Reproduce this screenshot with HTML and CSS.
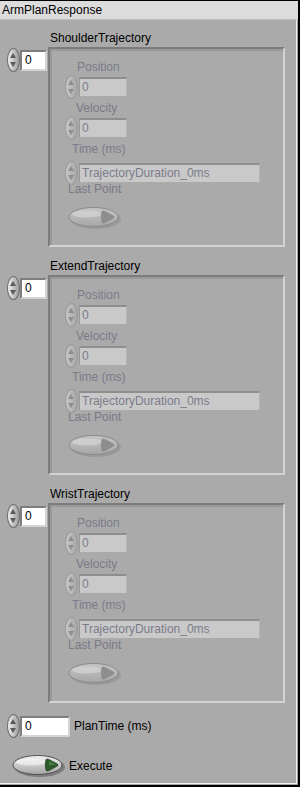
FILE: index.html
```html
<!DOCTYPE html>
<html lang="en">
<head>
    <meta charset="UTF-8">
    <meta name="viewport" content="width=device-width, initial-scale=1.0">
    <title>ArmPlanResponse</title>
    <link rel="stylesheet" href="styles.css">
</head>
<body>
<div class="window">
    <div class="titlebar">ArmPlanResponse</div>
    <div class="panel">

        <section class="cluster">
            <div class="cluster-name">ShoulderTrajectory</div>
            <div class="index"><span class="spin"></span><span class="num">0</span></div>
            <div class="frame">
                <div class="lbl lbl-pos">Position</div>
                <div class="row"><span class="spin off"></span><span class="num off">0</span></div>
                <div class="lbl lbl-vel">Velocity</div>
                <div class="row"><span class="spin off"></span><span class="num off">0</span></div>
                <div class="lbl lbl-time">Time (ms)</div>
                <div class="row row-str"><span class="spin off"></span><span class="str">TrajectoryDuration_0ms</span></div>
                <div class="lbl lbl-last">Last Point</div>
                <div class="btn btn-off">
                    <svg width="54" height="24" viewBox="0 0 54 24">
                        <defs><linearGradient id="bd1" x1="0" y1="0" x2="0" y2="1"><stop offset="0" stop-color="#c6c6c6"/><stop offset="1" stop-color="#a6a6a6"/></linearGradient></defs>
                        <ellipse cx="27.5" cy="13" rx="25.5" ry="10" fill="#8e8e8e" opacity="0.6"/>
                        <ellipse cx="25.5" cy="11" rx="24.5" ry="9.5" fill="url(#bd1)" stroke="#8a8a8a"/>
                        <ellipse cx="19" cy="8" rx="15" ry="3.5" fill="#d4d4d4" opacity="0.7"/>
                        <path d="M34 5.5 Q32.5 11 34 16.5 Q35 17.5 36.5 16.8 L45.5 12 Q46.5 11 45.5 10 L36.5 5.2 Q35 4.5 34 5.5 Z" fill="#8e8e8e" stroke="#858585" stroke-width="0.6"/>
                    </svg>
                </div>
            </div>
        </section>

        <section class="cluster">
            <div class="cluster-name">ExtendTrajectory</div>
            <div class="index"><span class="spin"></span><span class="num">0</span></div>
            <div class="frame">
                <div class="lbl lbl-pos">Position</div>
                <div class="row"><span class="spin off"></span><span class="num off">0</span></div>
                <div class="lbl lbl-vel">Velocity</div>
                <div class="row"><span class="spin off"></span><span class="num off">0</span></div>
                <div class="lbl lbl-time">Time (ms)</div>
                <div class="row row-str"><span class="spin off"></span><span class="str">TrajectoryDuration_0ms</span></div>
                <div class="lbl lbl-last">Last Point</div>
                <div class="btn btn-off">
                    <svg width="54" height="24" viewBox="0 0 54 24">
                        <defs><linearGradient id="bd2" x1="0" y1="0" x2="0" y2="1"><stop offset="0" stop-color="#c6c6c6"/><stop offset="1" stop-color="#a6a6a6"/></linearGradient></defs>
                        <ellipse cx="27.5" cy="13" rx="25.5" ry="10" fill="#8e8e8e" opacity="0.6"/>
                        <ellipse cx="25.5" cy="11" rx="24.5" ry="9.5" fill="url(#bd2)" stroke="#8a8a8a"/>
                        <ellipse cx="19" cy="8" rx="15" ry="3.5" fill="#d4d4d4" opacity="0.7"/>
                        <path d="M34 5.5 Q32.5 11 34 16.5 Q35 17.5 36.5 16.8 L45.5 12 Q46.5 11 45.5 10 L36.5 5.2 Q35 4.5 34 5.5 Z" fill="#8e8e8e" stroke="#858585" stroke-width="0.6"/>
                    </svg>
                </div>
            </div>
        </section>

        <section class="cluster">
            <div class="cluster-name">WristTrajectory</div>
            <div class="index"><span class="spin"></span><span class="num">0</span></div>
            <div class="frame">
                <div class="lbl lbl-pos">Position</div>
                <div class="row"><span class="spin off"></span><span class="num off">0</span></div>
                <div class="lbl lbl-vel">Velocity</div>
                <div class="row"><span class="spin off"></span><span class="num off">0</span></div>
                <div class="lbl lbl-time">Time (ms)</div>
                <div class="row row-str"><span class="spin off"></span><span class="str">TrajectoryDuration_0ms</span></div>
                <div class="lbl lbl-last">Last Point</div>
                <div class="btn btn-off">
                    <svg width="54" height="24" viewBox="0 0 54 24">
                        <defs><linearGradient id="bd3" x1="0" y1="0" x2="0" y2="1"><stop offset="0" stop-color="#c6c6c6"/><stop offset="1" stop-color="#a6a6a6"/></linearGradient></defs>
                        <ellipse cx="27.5" cy="13" rx="25.5" ry="10" fill="#8e8e8e" opacity="0.6"/>
                        <ellipse cx="25.5" cy="11" rx="24.5" ry="9.5" fill="url(#bd3)" stroke="#8a8a8a"/>
                        <ellipse cx="19" cy="8" rx="15" ry="3.5" fill="#d4d4d4" opacity="0.7"/>
                        <path d="M34 5.5 Q32.5 11 34 16.5 Q35 17.5 36.5 16.8 L45.5 12 Q46.5 11 45.5 10 L36.5 5.2 Q35 4.5 34 5.5 Z" fill="#8e8e8e" stroke="#858585" stroke-width="0.6"/>
                    </svg>
                </div>
            </div>
        </section>

        <div class="plantime">
            <span class="spin"></span><span class="num num-wide">0</span>
            <span class="ctl-name">PlanTime (ms)</span>
        </div>

        <div class="execute">
            <div class="btn">
                <svg width="54" height="24" viewBox="0 0 54 24">
                    <defs><linearGradient id="be" x1="0" y1="0" x2="0" y2="1"><stop offset="0" stop-color="#f2f2f2"/><stop offset="1" stop-color="#a4a4a4"/></linearGradient></defs>
                    <ellipse cx="27.5" cy="13" rx="25.5" ry="10" fill="#555" opacity="0.55"/>
                    <ellipse cx="25.5" cy="11" rx="24.5" ry="9.5" fill="url(#be)" stroke="#505050"/>
                    <ellipse cx="19" cy="8" rx="15" ry="3.5" fill="#fff" opacity="0.5"/>
                    <path d="M34 5.5 Q32.5 11 34 16.5 Q35 17.5 36.5 16.8 L45.5 12 Q46.5 11 45.5 10 L36.5 5.2 Q35 4.5 34 5.5 Z" fill="#2e5a2a" stroke="#1d3a1b" stroke-width="0.6"/>
                    <path d="M37 7 L44 10.8 L37 11.5 Z" fill="#4f8a45" opacity="0.8"/>
                </svg>
            </div>
            <span class="ctl-name">Execute</span>
        </div>

    </div>
</div>
</body>
</html>
```

FILE: styles.css
```css
body {
    margin: 0;
    font-family: "Liberation Sans", Arial, sans-serif;
    font-size: 12px;
    color: #000;
}

.window {
    width: 300px;
    height: 787px;
    box-sizing: border-box;
    border-top: 1px solid #000;
    border-right: 2px solid #000;
    border-bottom: 2px solid #000;
    background: #a2a2a2;
    display: flex;
    flex-direction: column;
}

.titlebar {
    height: 18px;
    line-height: 18px;
    padding-left: 2px;
    background: #dcdcdc;
}

.panel {
    flex: 1;
    margin: 0 1px 1px 0;
    border-top: 1px solid #bfbfbf;
    border-right: 1px solid #f0f0f0;
    border-bottom: 1px solid #f0f0f0;
    background: #aaaaaa;
    padding-left: 7px;
}

/* cluster = label, index control, frame */
.cluster {
    display: grid;
    grid-template-columns: 41px 237px;
    grid-template-rows: 15px 200px;
    row-gap: 2px;
    padding-top: 10px;
    margin-bottom: 1px;
}

.cluster-name {
    grid-column: 2;
    line-height: 15px;
    padding-left: 2px;
    margin-top: 1px;
}

.index {
    grid-column: 1;
    grid-row: 2;
    display: flex;
    align-items: center;
    align-self: start;
    margin-top: 1px;
}

.frame {
    grid-column: 2;
    grid-row: 2;
    box-sizing: border-box;
    border-top: 2px solid #7c7c7c;
    border-left: 2px solid #7c7c7c;
    border-right: 2px solid #d2d2d2;
    border-bottom: 2px solid #d2d2d2;
    box-shadow: inset 2px 2px 0 #9a9a9a;
    padding-left: 15px;
}

/* spinner arrows */
.spin {
    position: relative;
    display: inline-block;
    width: 11px;
    height: 22px;
    border: 1px solid #6c6c6c;
    border-radius: 50%;
    background: linear-gradient(90deg, #f0f0f0, #9a9a9a);
    flex-shrink: 0;
}

.spin::before,
.spin::after {
    content: "";
    position: absolute;
    left: 2px;
    border-left: 3.5px solid transparent;
    border-right: 3.5px solid transparent;
}

.spin::before {
    top: 4px;
    border-bottom: 5px solid #5a5a5a;
}

.spin::after {
    bottom: 4px;
    border-top: 5px solid #5a5a5a;
}

.spin.off {
    border-color: #9a9a9a;
    background: linear-gradient(90deg, #c8c8c8, #a6a6a6);
}

.spin.off::before { border-bottom-color: #8e8e8e; }
.spin.off::after { border-top-color: #8e8e8e; }

.num {
    box-sizing: border-box;
    width: 27px;
    height: 21px;
    line-height: 17px;
    padding-left: 3px;
    background: #fff;
    border: 2px solid #d4d4d4;
    border-top-color: #7e7e7e;
    border-left-color: #7e7e7e;
}

.num-wide {
    width: 50px;
}

.num.off,
.str {
    height: 19px;
    line-height: 16px;
    padding-left: 2px;
    background: #c9c9c9;
    color: #7c7c8c;
    border: 0;
    border-top: 2px solid #8e8e8e;
    border-left: 1px solid #999;
    border-right: 1px solid #b6b6b6;
    margin-left: 1px;
}

.num.off {
    width: 48px;
}

.str {
    box-sizing: border-box;
    width: 181px;
}

.row {
    display: flex;
    align-items: center;
    height: 19px;
}

.lbl {
    line-height: 15px;
    color: #7a7a88;
}

.lbl-pos { margin-top: 11px; padding-left: 12px; }
.lbl-vel { margin-top: 5px; padding-left: 11px; }
.lbl-time { margin-top: 5px; padding-left: 7px; }
.lbl-last { padding-left: 3px; }

.row { margin-top: 2px; }
.row-str { margin-top: 6px; }

.btn {
    line-height: 0;
}

.btn-off {
    margin-top: 9px;
    margin-left: 3px;
}

.plantime {
    display: flex;
    align-items: center;
    margin-top: 11px;
}

.ctl-name {
    margin-left: 4px;
}

.execute {
    display: flex;
    align-items: center;
    margin-top: 16px;
    padding-left: 5px;
}

.execute .ctl-name {
    margin-left: 3px;
}
```
